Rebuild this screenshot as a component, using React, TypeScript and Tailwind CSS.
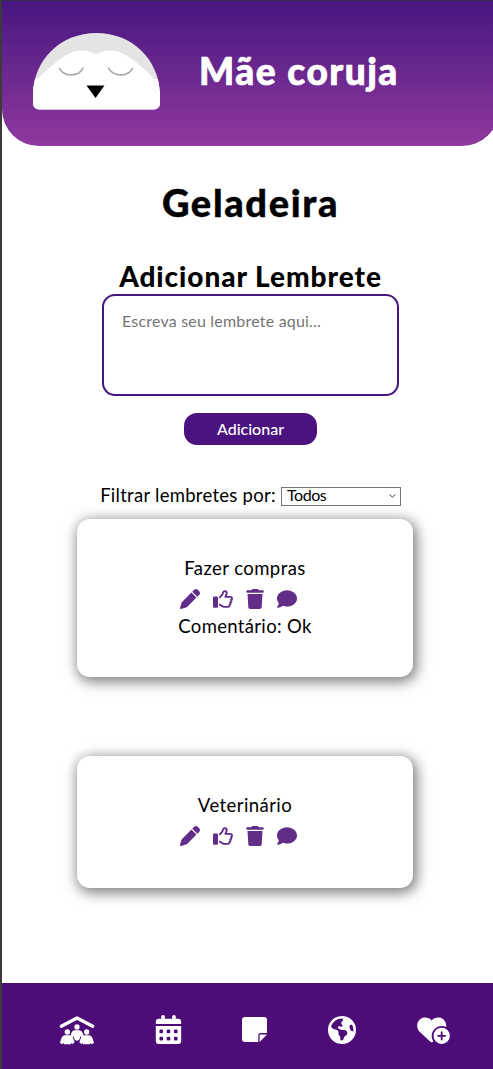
import { FaCalendarDays, FaComment, FaEarthAmericas, FaHeartCirclePlus, FaPen, FaRegThumbsUp, FaTrash } from "react-icons/fa6";

function OwlLogo() {
  return (
    <svg className="h-[77px] w-[127px] shrink-0" viewBox="0 0 127 77">
      <clipPath id="owl-head">
        <path d="M0 61C1 26 28 0 63.500 0S126 26 127 61v9.500a6 6 0 0 1-6 6H6a6 6 0 0 1-6-6z" />
      </clipPath>
      <g clipPath="url(#owl-head)">
        <path d="M0 0h127v77H0z" fill="#e4e4e4" />
        <path
          d="M0 46h4.500C16 35 32 20 44 17.800c8-1.600 13 .7 19 3.700 6-3 11-5.300 19-3.700 12 2.200 29 17.500 39.500 28.200H127v31H0z"
          fill="#fff"
        />
      </g>
      <path d="M26.500 35.500c5 8.600 19 8.600 23.500-.3M75.500 35.200c5 8.900 19 8.900 24 .3" fill="none" stroke="#aaa" strokeWidth="1.600" strokeLinecap="round" />
      <path d="M53.500 52.500h18L62.500 65z" fill="#000" />
    </svg>
  );
}

function HomeIcon() {
  return (
    <svg className="h-[30px] w-[36px]" viewBox="0 0 108 90" fill="#fff">
      <path d="M7 34 54 9l47 25" fill="none" stroke="#fff" strokeWidth="10" strokeLinecap="round" strokeLinejoin="round" />
      <circle cx="54" cy="36" r="8" />
      <circle cx="25" cy="51" r="8" />
      <circle cx="83" cy="51" r="8" />
      <path d="M47 46h14c7 0 10 7 13 17l-6 5-4-5c0 8-3 14-10 14s-10-6-10-14l-4 5-6-5c3-10 6-17 13-17z" />
      <path d="M18 61h14c6 0 10 5 15 21l-7 6-4-5v5H15v-5l-4 5-8-4c4-17 8-23 15-23zM76 61h14c7 0 11 6 15 23l-8 4-4-5v5H72v-5l-4 5-7-6c5-16 9-21 15-21z" />
    </svg>
  );
}

function NoteIcon() {
  return (
    <svg className="h-[25px] w-[25px]" viewBox="0 0 25 25" fill="#fff">
      <path d="M3 0h19a3 3 0 0 1 3 3v13h-6.500a2.200 2.200 0 0 0-2.200 2.200V25H3a3 3 0 0 1-3-3V3a3 3 0 0 1 3-3z" />
      <path d="M25 17.500 17.600 25v-6.500a1 1 0 0 1 1-1z" />
    </svg>
  );
}

function Actions() {
  return (
    <div className="flex h-5 gap-3 pl-[103px] text-[20px] text-[#622d88]">
      <FaPen />
      <FaRegThumbsUp className="ml-[1px]" />
      <FaTrash />
      <FaComment />
    </div>
  );
}

function Card({ title, comment }: { title: string; comment?: string }) {
  return (
    <article className="w-[336px] rounded-[13px] bg-white pt-[36px] pb-[37px] text-center shadow-[2px_3px_13px_2px_rgba(0,0,0,0.5)]">
      <p className="mb-[7px] text-[18.5px] leading-[27px] tracking-[0.43px]">{title}</p>
      <Actions />
      {comment && <p className="mt-[4px] text-[18.5px] leading-[27px] tracking-[0.33px]">{comment}</p>}
      {!comment && <div className="h-[5px]" />}
    </article>
  );
}

export default function App() {
  return (
    <div className="flex h-[1069px] w-[493px] flex-col overflow-hidden border-t border-l-2 border-t-[#342a4a] border-l-[#3b3b3b] bg-white font-['Lato','Liberation_Sans',sans-serif] text-black">
      <header className="flex h-[145px] w-[497px] shrink-0 rounded-b-[37px] bg-linear-to-b from-[#48147f] to-[#90389f] pt-8 pl-[31px]">
        <OwlLogo />
        <h1 className="mt-[12px] ml-[39px] text-[37px] leading-[52px] font-black tracking-[1.5px] whitespace-nowrap text-white [-webkit-text-stroke:0.7px]">Mãe coruja</h1>
      </header>

      <main className="flex w-[497px] flex-1 flex-col items-center">
        <h2 className="mt-[31px] text-[38px] leading-[50px] font-black tracking-[1.65px] [-webkit-text-stroke:0.4px]">Geladeira</h2>
        <h3 className="mt-[31px] text-[28px] leading-[36px] font-black tracking-[0.95px]">Adicionar Lembrete</h3>
        <textarea
          className="block h-[102px] w-[297px] shrink-0 resize-none rounded-[13px] border-[2.5px] border-[#48147f] px-[18px] py-[14px] text-[16px] leading-[22px] tracking-[0.2px] outline-none placeholder:text-[#757575]"
          placeholder="Escreva seu lembrete aqui..."
        />
        <button className="mt-[17px] h-8 w-[133px] shrink-0 rounded-[13px] bg-[#4a137f] text-[16px] leading-[30px] font-medium text-white">Adicionar</button>
        <div className="mt-[41px] flex items-center">
          <label className="mr-[5px] pb-[2px] text-[18.5px] leading-[18px] tracking-[0.27px] whitespace-nowrap">Filtrar lembretes por:</label>
          <div className="flex h-[19px] w-[120px] items-center justify-between border border-[#767676] pr-[4px] pl-[5px] text-[16px] leading-[17px] tracking-[-0.4px]">
            <span className="-mt-[3px]">Todos</span>
            <svg className="h-[4px] w-[7px]" viewBox="0 0 7 4">
              <path d="m.5.5 3 2.700 3-2.700" fill="none" stroke="#444" />
            </svg>
          </div>
        </div>
        <div className="mt-[13px] mr-[11px] flex flex-col gap-[79px]">
          <Card title="Fazer compras" comment="Comentário: Ok" />
          <Card title="Veterinário" />
        </div>
      </main>

      <nav className="flex h-[86px] shrink-0 items-center bg-[#4e0c79] pt-[7px] pl-[57px] text-[28px] text-white">
        <HomeIcon />
        <FaCalendarDays className="ml-[60px] h-[29px] w-[27px]" />
        <div className="ml-[60px]">
          <NoteIcon />
        </div>
        <FaEarthAmericas className="ml-[61px]" />
        <FaHeartCirclePlus className="ml-[61px] h-[29px] w-[33px]" />
      </nav>
    </div>
  );
}
